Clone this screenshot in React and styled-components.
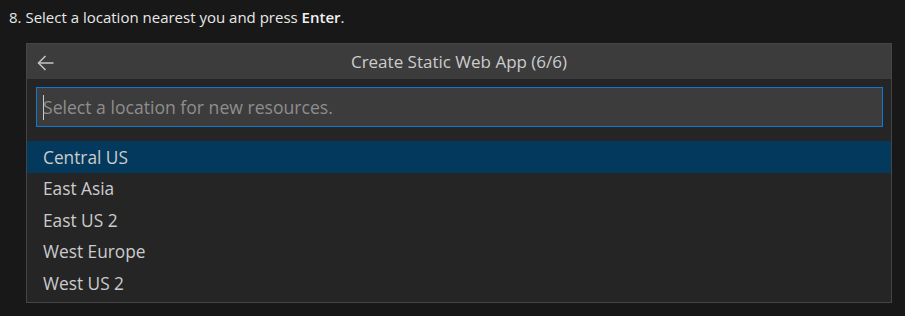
import React from "react";
import styled, { createGlobalStyle } from "styled-components";

const GlobalStyle = createGlobalStyle`
    html, body {
        margin: 0;
        padding: 0;
        background: #181818;
    }
    body {
        width: 905px;
        height: 316px;
        overflow: hidden;
        font-family: "Open Sans", "Noto Sans", sans-serif;
    }
`;

const Page = styled.div`
    padding: 5px 0 0 9px;
`;

const Step = styled.p`
    margin: 0;
    font-size: 15px;
    line-height: 24px;
    color: #e8e8e8;

    b {
        font-weight: 600;
        color: #f2f2f2;
    }
`;

const Picker = styled.div`
    width: 864px;
    margin: 14px 0 0 17px;
    background: #252526;
    border: 1px solid #454545;
`;

const TitleBar = styled.div`
    position: relative;
    height: 35px;
    display: flex;
    align-items: center;
    justify-content: center;
    background: #3c3c3c;
    color: #cccccc;
    font-size: 17px;
`;

const BackButton = styled.span`
    position: absolute;
    left: 10px;
    top: 11px;
    display: flex;
    color: #c5c5c5;
`;

const InputWrap = styled.div`
    padding: 8px 8px 14px 9px;
`;

const Input = styled.div`
    height: 38px;
    display: flex;
    align-items: center;
    padding-left: 6px;
    background: #3c3c3c;
    border: 1px solid #0e7ad3;
    color: #8e8e8e;
    font-size: 17.6px;
`;

const Caret = styled.span`
    width: 1px;
    height: 25px;
    margin-right: -1px;
    background: #cccccc;
`;

const List = styled.ul`
    list-style: none;
    margin: 0;
    padding: 0 0 3px 0;
`;

const Item = styled.li`
    height: 32px;
    display: flex;
    align-items: center;
    padding-left: 16px;
    font-size: 17.3px;
    color: #cccccc;
    background: ${(p) => (p.$active ? "#04395e" : "transparent")};

    &:nth-child(even) {
        height: 31px;
    }
`;

const regions = ["Central US", "East Asia", "East US 2", "West Europe", "West US 2"];

const ArrowLeft = () => (
    <svg width="17" height="16" viewBox="0 0 17 16" fill="none" stroke="currentColor" strokeWidth="1.5">
        <path d="M1.5 8H16.5" />
        <path d="M8.5 1L1.5 8L8.5 15" />
    </svg>
);

const App = () => {
    return (
        <React.Fragment>
            <GlobalStyle />
            <Page>
                <Step>
                    8. Select a location nearest you and press <b>Enter</b>.
                </Step>
                <Picker>
                    <TitleBar>
                        <BackButton>
                            <ArrowLeft />
                        </BackButton>
                        Create Static Web App (6/6)
                    </TitleBar>
                    <InputWrap>
                        <Input>
                            <Caret />
                            Select a location for new resources.
                        </Input>
                    </InputWrap>
                    <List>
                        {regions.map((name, i) => (
                            <Item key={name} $active={i === 0}>
                                {name}
                            </Item>
                        ))}
                    </List>
                </Picker>
            </Page>
        </React.Fragment>
    );
};

export default App;
